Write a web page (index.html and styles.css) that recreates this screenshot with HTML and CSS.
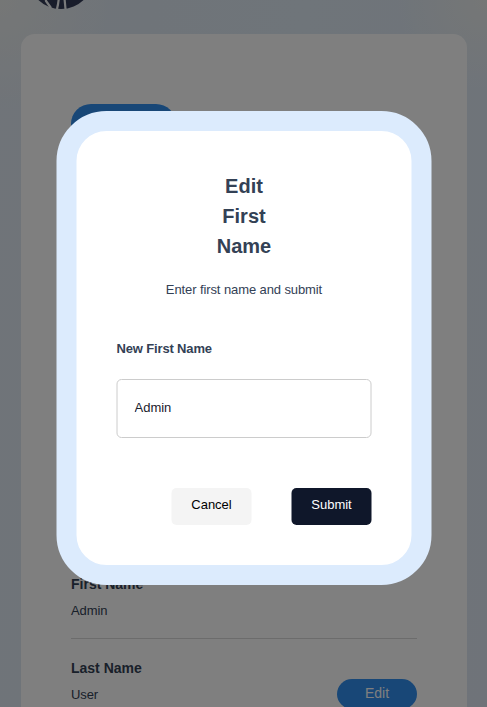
FILE: index.html
```
<!DOCTYPE html>
<html lang="en">
<head>
<meta charset="utf-8">
<title>Profile</title>
<link rel="stylesheet" href="styles.css">
</head>
<body>
<div class="page">
  <header class="header">
    <svg class="logo" width="66" height="66" viewBox="0 0 66 66">
      <circle cx="33" cy="33" r="33" fill="#323a56"/>
      <path d="M17 50L18 58L23 65M31 50Q31 58 29 66M36 50L37.5 66" fill="none" stroke="#f2f4f6" stroke-width="2.2"/>
    </svg>
  </header>
  <main class="card">
    <button class="pill upload"></button>
    <section class="row first">
      <div class="details"><h3>First Name</h3><p>Admin</p></div>
    </section>
    <section class="row">
      <div class="details"><h3>Last Name</h3><p>User</p></div>
      <button class="pill edit">Edit</button>
    </section>
  </main>
</div>
<div class="overlay">
  <form class="modal">
    <h2>Edit First Name</h2>
    <p class="hint">Enter first name and submit</p>
    <label for="name">New First Name</label>
    <input id="name" type="text" value="Admin">
    <div class="actions">
      <button type="button" class="btn cancel">Cancel</button>
      <button type="button" class="btn submit">Submit</button>
    </div>
  </form>
</div>
</body>
</html>
```
FILE: styles.css
```
* { box-sizing: border-box; }
body, h2, h3, p { margin: 0; }
html, body { height: 100%; overflow: hidden; }
body, button, input { font-family: "Liberation Sans", Arial, sans-serif; font-size: 13px; }
body { color: #334155; }
.page {
  height: 707px;
  overflow: hidden;
  padding: 0 20px 0 21px;
  background:
    radial-gradient(circle at 0 0, #ebeeed 0, rgba(235, 238, 237, 0) 110px),
    radial-gradient(circle at 100% 0, #ebeeed 0, rgba(235, 238, 237, 0) 90px),
    linear-gradient(100deg, #e0e8f2 0%, #deeaf4 50%, #dfe7f3 100%);
}
.header { display: flex; height: 34px; padding: 0 0 25px 7px; overflow: hidden; }
.logo { display: block; flex: none; margin-top: -57px; }
.card {
  height: 900px;
  padding: 70px 50px 0;
  border-radius: 14px;
  background: #fff;
}
.pill { display: block; border: 0; background: #308eee; color: #fff; }
.upload { width: 105px; height: 40px; border-radius: 20px; }
.row {
  display: flex;
  justify-content: space-between;
  height: 84px;
  padding-top: 19px;
}
.row.first { margin-top: 411px; border-bottom: 1px solid #d8d8d8; }
.row h3 { font-size: 14px; line-height: 20px; }
.row p { margin-top: 7px; line-height: 20px; letter-spacing: -.1px; }
.edit { width: 80px; height: 30px; margin-top: 21px; padding: 0 0 2px; border-radius: 15px; font-size: 14px; }
.overlay {
  position: fixed;
  inset: 0;
  padding: 111px 0 0 56px;
  background: rgba(0, 0, 0, .5);
}
.modal {
  display: flex;
  flex-direction: column;
  width: 375px;
  height: 474px;
  padding: 40px;
  border: 20px solid #dcebfd;
  border-radius: 50px;
  background: #fff;
  transform: translateX(.5px);
}
.modal h2 { width: 70px; align-self: center; text-align: center; font-size: 20px; line-height: 30px; }
.hint { margin-top: 19px; text-align: center; line-height: 20px; letter-spacing: -.1px; }
.modal label { margin-top: 40px; line-height: 18px; font-weight: bold; letter-spacing: -.15px; }
.modal input {
  height: 59px;
  margin-top: 21px;
  padding: 0 17px 2px;
  border: 1px solid #ccc;
  border-radius: 5px;
  color: #1a202c;
  background: #fff;
}
.actions { display: flex; justify-content: flex-end; gap: 40px; margin-top: 50px; }
.btn { width: 80px; height: 37px; padding: 0 0 4px; border: 0; border-radius: 5px; }
.cancel { background: #f4f4f4; color: #000; }
.submit { background: #0f172a; color: #fff; }
```
